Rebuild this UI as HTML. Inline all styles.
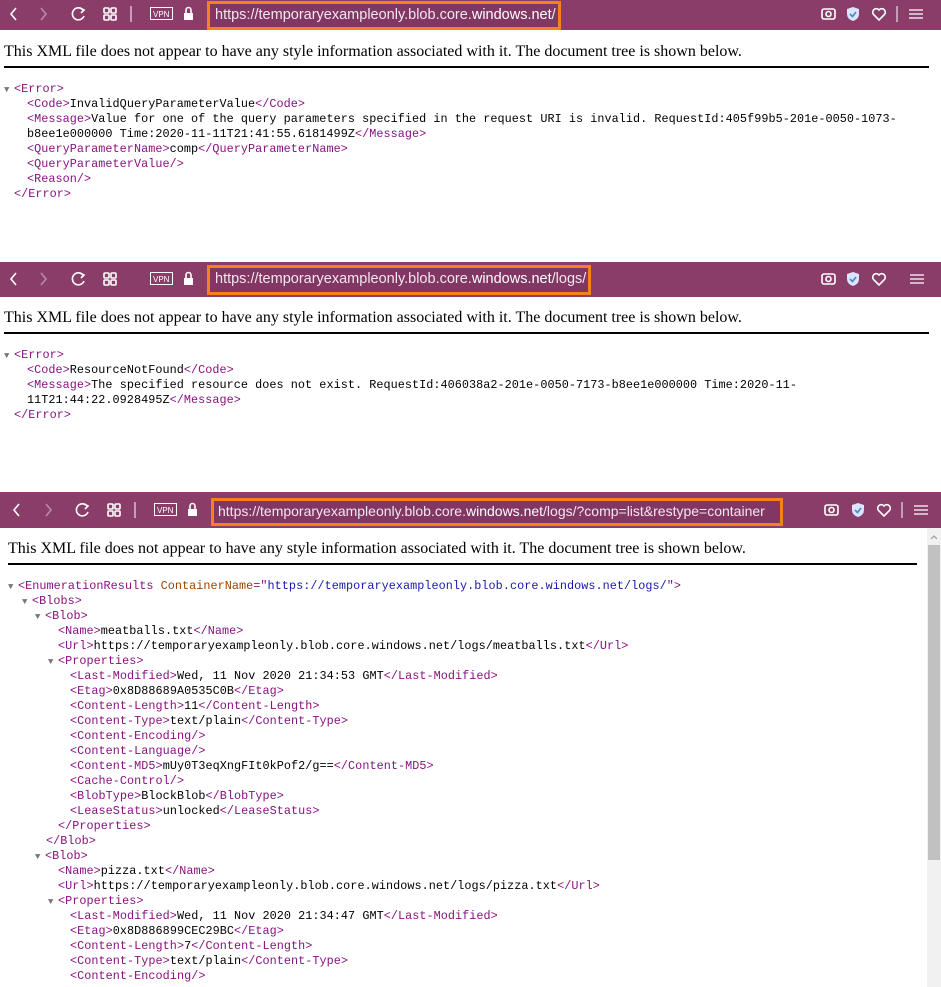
<!DOCTYPE html>
<html><head><meta charset="utf-8"><style>
*{margin:0;padding:0;box-sizing:border-box}
body{width:941px;height:987px;background:#fff;position:relative;overflow:hidden;font-family:"Liberation Mono",monospace}
.bar{position:absolute;left:0;width:941px;background:#8b3d6a;color:#fff}
.url{position:absolute;border:3px solid #f7811f;font-family:"Liberation Sans",sans-serif;font-size:14.5px;color:#f3e6ee;line-height:22px;padding-left:5px;white-space:nowrap;background:#823663;overflow:hidden}
.url b{font-weight:normal;color:#fff}
.ic{position:absolute}
.h{position:absolute;font-family:"Liberation Serif",serif;font-size:16px;color:#000;white-space:nowrap}
.rule{position:absolute;height:2px;background:#000}
.l{position:absolute;font-size:11.8px;line-height:15px;white-space:nowrap;color:#000;letter-spacing:0.05px}
.t{color:#881280}.a{color:#994500}.v{color:#1a1aa6}
.tri{color:#777;font-size:9px;letter-spacing:0;display:inline-block;width:10px}
</style></head><body>

<div class="bar" style="top:0;height:30px"></div>
<div class="bar" style="top:262px;height:35px"></div>
<div class="bar" style="top:492px;height:36px"></div>

<svg class="ic" style="left:0;top:0" width="941" height="30" fill="none" stroke="#fff" stroke-width="1.6">
<path d="M16 8 L11 14 L16 20"/><path d="M41 8 L46 14 L41 20" stroke="#b98aa5"/>
<path d="M83 10 A6 6 0 1 0 84 16"/><path d="M80 8 L84 10 L81 13"/>
<rect x="104" y="8" width="5" height="5" rx="1"/><rect x="111" y="8" width="5" height="5" rx="1"/><rect x="104" y="15" width="5" height="5" rx="1"/><rect x="111" y="15" width="5" height="5" rx="1"/>
<path d="M131 6 V22" stroke-width="1"/>
<rect x="150.5" y="7.5" width="22" height="12" stroke-width="1"/>
<text x="153" y="17" fill="#fff" stroke="none" font-family="Liberation Sans" font-size="8">VPN</text>
<rect x="184" y="13" width="9" height="7" fill="#fff" stroke="none"/><path d="M186 13 V10 A2.5 2.5 0 0 1 191 10 V13"/>
<rect x="822" y="9" width="13" height="10" rx="2"/><circle cx="828.5" cy="14" r="2.5"/>
<path d="M853 7 L859 9 V14 Q859 19 853 21 Q847 19 847 14 V9 Z" fill="#d9e6fb" stroke="none"/><path d="M850 14 L852.5 16.5 L856 12" stroke="#4f7fd9"/>
<path d="M879 20 L873.5 14.5 A3 3 0 0 1 879 10 A3 3 0 0 1 884.5 14.5 Z"/>
<path d="M897 6 V22" stroke-width="1"/>
<path d="M909 10 H923 M909 14 H923 M909 18 H923" stroke-width="1.2"/>
</svg>
<div class="url" style="left:207px;top:1px;width:354px;height:29px">https://temporaryexampleonly.blob.core.<b>windows.net</b>/</div>

<svg class="ic" style="left:0;top:265px" width="941" height="30" fill="none" stroke="#fff" stroke-width="1.6">
<path d="M16 8 L11 14 L16 20"/><path d="M41 8 L46 14 L41 20" stroke="#b98aa5"/>
<path d="M83 10 A6 6 0 1 0 84 16"/><path d="M80 8 L84 10 L81 13"/>
<rect x="104" y="8" width="5" height="5" rx="1"/><rect x="111" y="8" width="5" height="5" rx="1"/><rect x="104" y="15" width="5" height="5" rx="1"/><rect x="111" y="15" width="5" height="5" rx="1"/>
<rect x="150.5" y="7.5" width="22" height="12" stroke-width="1"/>
<text x="153" y="17" fill="#fff" stroke="none" font-family="Liberation Sans" font-size="8">VPN</text>
<rect x="184" y="13" width="9" height="7" fill="#fff" stroke="none"/><path d="M186 13 V10 A2.5 2.5 0 0 1 191 10 V13"/>
<rect x="822" y="9" width="13" height="10" rx="2"/><circle cx="828.5" cy="14" r="2.5"/>
<path d="M853 7 L859 9 V14 Q859 19 853 21 Q847 19 847 14 V9 Z" fill="#d9e6fb" stroke="none"/><path d="M850 14 L852.5 16.5 L856 12" stroke="#4f7fd9"/>
<path d="M879 20 L873.5 14.5 A3 3 0 0 1 879 10 A3 3 0 0 1 884.5 14.5 Z"/>
<path d="M910 10 H924 M910 14 H924 M910 18 H924" stroke-width="1.2"/>
</svg>
<div class="url" style="left:207px;top:265px;width:384px;height:30px">https://temporaryexampleonly.blob.core.<b>windows.net</b>/logs/</div>

<svg class="ic" style="left:0;top:496px" width="941" height="30" fill="none" stroke="#fff" stroke-width="1.6">
<path d="M19 8 L14 14 L19 20"/><path d="M46 8 L51 14 L46 20" stroke="#b98aa5"/>
<path d="M87 10 A6 6 0 1 0 88 16"/><path d="M84 8 L88 10 L85 13"/>
<rect x="108" y="8" width="5" height="5" rx="1"/><rect x="115" y="8" width="5" height="5" rx="1"/><rect x="108" y="15" width="5" height="5" rx="1"/><rect x="115" y="15" width="5" height="5" rx="1"/>
<path d="M135 6 V22" stroke-width="1"/>
<rect x="154.5" y="7.5" width="22" height="12" stroke-width="1"/>
<text x="157" y="17" fill="#fff" stroke="none" font-family="Liberation Sans" font-size="8">VPN</text>
<rect x="188" y="13" width="9" height="7" fill="#fff" stroke="none"/><path d="M190 13 V10 A2.5 2.5 0 0 1 195 10 V13"/>
<rect x="825" y="9" width="13" height="10" rx="2"/><circle cx="831.5" cy="14" r="2.5"/>
<path d="M858 7 L864 9 V14 Q864 19 858 21 Q852 19 852 14 V9 Z" fill="#d9e6fb" stroke="none"/><path d="M855 14 L857.5 16.5 L861 12" stroke="#4f7fd9"/>
<path d="M884 20 L878.5 14.5 A3 3 0 0 1 884 10 A3 3 0 0 1 889.5 14.5 Z"/>
<path d="M902 6 V22" stroke-width="1"/>
<path d="M914 10 H928 M914 14 H928 M914 18 H928" stroke-width="1.2"/>
</svg>
<div class="url" style="left:211px;top:498px;width:572px;height:28px;line-height:20px;font-size:14px;padding-left:4px;letter-spacing:0">https://temporaryexampleonly.blob.core.<b>windows.net</b>/logs/?comp=list&amp;restype=container</div>

<div class="h" style="left:4px;top:43px">This XML file does not appear to have any style information associated with it. The document tree is shown below.</div>
<div class="rule" style="left:4px;top:66px;width:925px"></div>
<div class="l" style="left:4px;top:82px"><span class="tri">▼</span><span class="t">&lt;Error&gt;</span></div>
<div class="l" style="left:27px;top:97px"><span class="t">&lt;Code&gt;</span>InvalidQueryParameterValue<span class="t">&lt;/Code&gt;</span></div>
<div class="l" style="left:27px;top:112px"><span class="t">&lt;Message&gt;</span>Value for one of the query parameters specified in the request URI is invalid. RequestId:405f99b5-201e-0050-1073-</div>
<div class="l" style="left:27px;top:127px"><span>b8ee1e000000 Time:2020-11-11T21:41:55.6181499Z</span><span class="t">&lt;/Message&gt;</span></div>
<div class="l" style="left:27px;top:142px"><span class="t">&lt;QueryParameterName&gt;</span>comp<span class="t">&lt;/QueryParameterName&gt;</span></div>
<div class="l" style="left:27px;top:157px"><span class="t">&lt;QueryParameterValue/&gt;</span></div>
<div class="l" style="left:27px;top:172px"><span class="t">&lt;Reason/&gt;</span></div>
<div class="l" style="left:14px;top:187px"><span class="t">&lt;/Error&gt;</span></div>

<div class="h" style="left:4px;top:309px">This XML file does not appear to have any style information associated with it. The document tree is shown below.</div>
<div class="rule" style="left:4px;top:332px;width:925px"></div>
<div class="l" style="left:4px;top:348px"><span class="tri">▼</span><span class="t">&lt;Error&gt;</span></div>
<div class="l" style="left:27px;top:363px"><span class="t">&lt;Code&gt;</span>ResourceNotFound<span class="t">&lt;/Code&gt;</span></div>
<div class="l" style="left:27px;top:378px"><span class="t">&lt;Message&gt;</span>The specified resource does not exist. RequestId:406038a2-201e-0050-7173-b8ee1e000000 Time:2020-11-</div>
<div class="l" style="left:27px;top:393px">11T21:44:22.0928495Z<span class="t">&lt;/Message&gt;</span></div>
<div class="l" style="left:14px;top:408px"><span class="t">&lt;/Error&gt;</span></div>

<div class="h" style="left:8px;top:540px">This XML file does not appear to have any style information associated with it. The document tree is shown below.</div>
<div class="rule" style="left:8px;top:563px;width:909px"></div>
<div style="position:absolute;left:927px;top:528px;width:14px;height:459px;background:#f1f1f1"></div>
<div style="position:absolute;left:928px;top:545px;width:12px;height:315px;background:#c1c1c1"></div>
<svg class="ic" style="left:928px;top:532px" width="12" height="10"><path d="M3 7 L6 4 L9 7" fill="none" stroke="#a3a3a3" stroke-width="1.3"/></svg>

<div class="l" style="left:8px;top:579px"><span class="tri">▼</span><span class="t">&lt;EnumerationResults </span><span class="a">ContainerName</span><span class="t">="</span><span class="v">https://temporaryexampleonly.blob.core.windows.net/logs/</span><span class="t">"&gt;</span></div>
<div class="l" style="left:22px;top:594px"><span class="tri">▼</span><span class="t">&lt;Blobs&gt;</span></div>
<div class="l" style="left:35px;top:609px"><span class="tri">▼</span><span class="t">&lt;Blob&gt;</span></div>
<div class="l" style="left:58px;top:624px"><span class="t">&lt;Name&gt;</span>meatballs.txt<span class="t">&lt;/Name&gt;</span></div>
<div class="l" style="left:58px;top:639px"><span class="t">&lt;Url&gt;</span>https://temporaryexampleonly.blob.core.windows.net/logs/meatballs.txt<span class="t">&lt;/Url&gt;</span></div>
<div class="l" style="left:48px;top:654px"><span class="tri">▼</span><span class="t">&lt;Properties&gt;</span></div>
<div class="l" style="left:70px;top:669px"><span class="t">&lt;Last-Modified&gt;</span>Wed, 11 Nov 2020 21:34:53 GMT<span class="t">&lt;/Last-Modified&gt;</span></div>
<div class="l" style="left:70px;top:684px"><span class="t">&lt;Etag&gt;</span>0x8D88689A0535C0B<span class="t">&lt;/Etag&gt;</span></div>
<div class="l" style="left:70px;top:699px"><span class="t">&lt;Content-Length&gt;</span>11<span class="t">&lt;/Content-Length&gt;</span></div>
<div class="l" style="left:70px;top:714px"><span class="t">&lt;Content-Type&gt;</span>text/plain<span class="t">&lt;/Content-Type&gt;</span></div>
<div class="l" style="left:70px;top:729px"><span class="t">&lt;Content-Encoding/&gt;</span></div>
<div class="l" style="left:70px;top:744px"><span class="t">&lt;Content-Language/&gt;</span></div>
<div class="l" style="left:70px;top:759px"><span class="t">&lt;Content-MD5&gt;</span>mUy0T3eqXngFIt0kPof2/g==<span class="t">&lt;/Content-MD5&gt;</span></div>
<div class="l" style="left:70px;top:774px"><span class="t">&lt;Cache-Control/&gt;</span></div>
<div class="l" style="left:70px;top:789px"><span class="t">&lt;BlobType&gt;</span>BlockBlob<span class="t">&lt;/BlobType&gt;</span></div>
<div class="l" style="left:70px;top:804px"><span class="t">&lt;LeaseStatus&gt;</span>unlocked<span class="t">&lt;/LeaseStatus&gt;</span></div>
<div class="l" style="left:58px;top:819px"><span class="t">&lt;/Properties&gt;</span></div>
<div class="l" style="left:46px;top:834px"><span class="t">&lt;/Blob&gt;</span></div>
<div class="l" style="left:35px;top:849px"><span class="tri">▼</span><span class="t">&lt;Blob&gt;</span></div>
<div class="l" style="left:58px;top:864px"><span class="t">&lt;Name&gt;</span>pizza.txt<span class="t">&lt;/Name&gt;</span></div>
<div class="l" style="left:58px;top:879px"><span class="t">&lt;Url&gt;</span>https://temporaryexampleonly.blob.core.windows.net/logs/pizza.txt<span class="t">&lt;/Url&gt;</span></div>
<div class="l" style="left:48px;top:894px"><span class="tri">▼</span><span class="t">&lt;Properties&gt;</span></div>
<div class="l" style="left:70px;top:909px"><span class="t">&lt;Last-Modified&gt;</span>Wed, 11 Nov 2020 21:34:47 GMT<span class="t">&lt;/Last-Modified&gt;</span></div>
<div class="l" style="left:70px;top:924px"><span class="t">&lt;Etag&gt;</span>0x8D886899CEC29BC<span class="t">&lt;/Etag&gt;</span></div>
<div class="l" style="left:70px;top:939px"><span class="t">&lt;Content-Length&gt;</span>7<span class="t">&lt;/Content-Length&gt;</span></div>
<div class="l" style="left:70px;top:954px"><span class="t">&lt;Content-Type&gt;</span>text/plain<span class="t">&lt;/Content-Type&gt;</span></div>
<div class="l" style="left:70px;top:969px"><span class="t">&lt;Content-Encoding/&gt;</span></div>
</body></html>
